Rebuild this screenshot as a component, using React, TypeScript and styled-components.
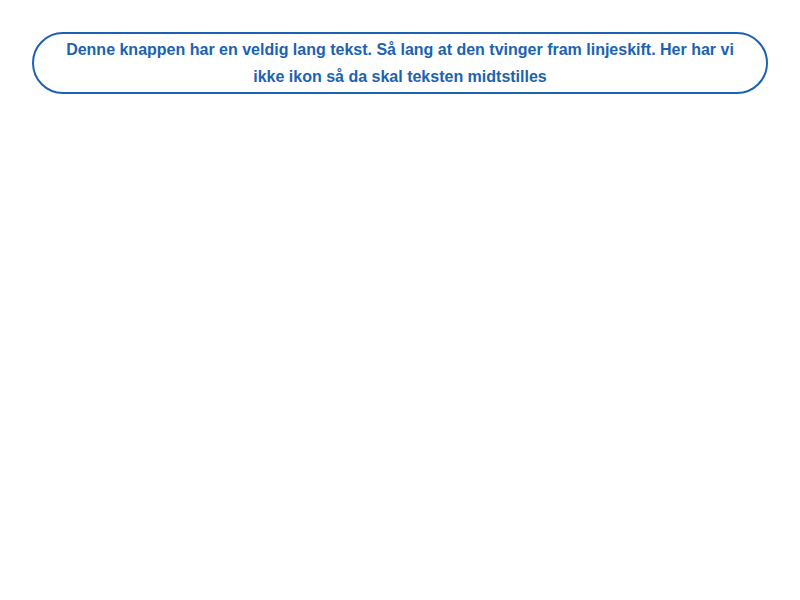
import React from "react";
import styled, { createGlobalStyle } from "styled-components";

const GlobalStyle = createGlobalStyle`
  html, body { margin: 0; padding: 0; background: #ffffff; }
  body { font-family: "Liberation Sans", Arial, sans-serif; }
`;

const Page = styled.div`
  padding: 32px;
`;

const Button = styled.button`
  display: flex;
  align-items: center;
  justify-content: center;
  width: 100%;
  box-sizing: border-box;
  margin: 0;
  padding: 2px 24px;
  border: 2px solid #1c62b2;
  border-radius: 999px;
  background: #ffffff;
  color: #1c62b2;
  font-family: "Liberation Sans", Arial, sans-serif;
  font-size: 16px;
  font-weight: 700;
  line-height: 27px;
  text-align: center;
  cursor: pointer;
`;

export default function App() {
  return (
    <>
      <GlobalStyle />
      <Page>
        <Button type="button">
          Denne knappen har en veldig lang tekst. Så lang at den tvinger fram linjeskift. Her har vi
          ikke ikon så da skal teksten midtstilles
        </Button>
      </Page>
    </>
  );
}
